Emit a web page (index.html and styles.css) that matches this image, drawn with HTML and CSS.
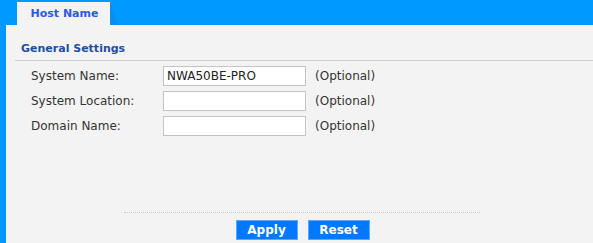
FILE: index.html
```html
<!DOCTYPE html>
<html>
<head>
<meta charset="utf-8">
<link rel="stylesheet" href="styles.css">
</head>
<body>
<div class="page">
  <div class="tabs">
    <div class="tab">Host Name</div>
    <div class="tab-slant"></div>
  </div>
  <div class="panel">
    <div class="section-title">General Settings</div>
    <div class="form">
      <div class="row">
        <label class="lbl">System Name:</label>
        <input class="field" type="text" value="NWA50BE-PRO">
        <span class="opt">(Optional)</span>
      </div>
      <div class="row">
        <label class="lbl">System Location:</label>
        <input class="field" type="text" value="">
        <span class="opt">(Optional)</span>
      </div>
      <div class="row">
        <label class="lbl">Domain Name:</label>
        <input class="field" type="text" value="">
        <span class="opt">(Optional)</span>
      </div>
    </div>
    <div class="footer">
      <div class="dots"></div>
      <div class="buttons">
        <button class="btn">Apply</button>
        <button class="btn">Reset</button>
      </div>
    </div>
  </div>
</div>
</body>
</html>
```
FILE: styles.css
```css
html, body {
  margin: 0;
  padding: 0;
  background: #0099ff;
  font-family: "DejaVu Sans", sans-serif;
}
.page {
  width: 593px;
  height: 243px;
  display: flex;
  flex-direction: column;
  overflow: hidden;
}
.tabs {
  display: flex;
  height: 23px;
  padding-top: 2px;
  padding-left: 17px;
}
.tab {
  width: 93px;
  background: #f3f3f3;
  color: #2a5be0;
  font-weight: bold;
  font-size: 11px;
  line-height: 24px;
  text-align: center;
  box-sizing: border-box;
  padding-left: 2px;
}
.tab-slant {
  width: 8px;
  height: 23px;
  background: linear-gradient(to top right, #0a8ef0 50%, transparent 50%);
}
.panel {
  flex: 1;
  margin-left: 6px;
  background: #f3f3f3;
  display: flex;
  flex-direction: column;
}
.section-title {
  margin: 17px 0 0 9px;
  padding: 0 0 4px 6px;
  border-bottom: 1px solid #cfcfcf;
  color: #1f4e9e;
  font-weight: bold;
  font-size: 11px;
  line-height: 14px;
}
.form {
  display: flex;
  flex-direction: column;
  gap: 5px;
  margin-top: 5px;
  padding-left: 25px;
}
.row {
  display: flex;
  align-items: center;
  height: 20px;
}
.lbl {
  width: 132px;
  font-size: 12px;
  color: #333;
}
.field {
  width: 143px;
  height: 20px;
  box-sizing: border-box;
  border: 1px solid #c4c4c4;
  background: #fff;
  font-family: "DejaVu Sans", sans-serif;
  font-size: 12px;
  color: #222;
  padding: 0 3px;
  margin: 0;
  border-radius: 0;
  outline: none;
}
.opt {
  margin-left: 9px;
  font-size: 12px;
  color: #333;
}
.footer {
  margin-top: auto;
  display: flex;
  flex-direction: column;
  align-items: center;
  padding-bottom: 3px;
}
.dots {
  width: 356px;
  margin-left: 4px;
  border-top: 1px dotted #c8c8c8;
}
.buttons {
  display: flex;
  gap: 10px;
  margin-top: 7px;
  margin-left: 6px;
}
.btn {
  width: 62px;
  height: 20px;
  margin: 0;
  padding: 0;
  border: 1px solid #5aa8ff;
  background: #0079ff;
  color: #fff;
  font-family: "DejaVu Sans", sans-serif;
  font-weight: bold;
  font-size: 12px;
  border-radius: 0;
}
```
